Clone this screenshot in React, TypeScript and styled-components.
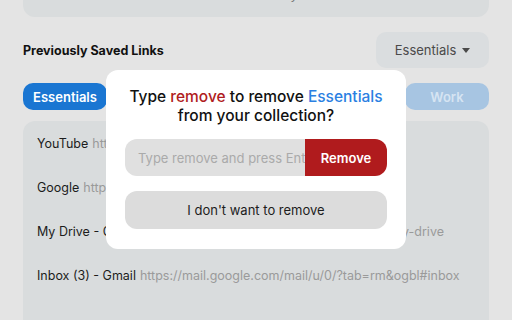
import React from "react";
import styled, { createGlobalStyle } from "styled-components";

const Global = createGlobalStyle`
  html, body { margin: 0; padding: 0; background: #e4e4e4; overflow: hidden; }
  body { font-family: Inter, "Noto Sans", sans-serif; }
  * { box-sizing: border-box; }
`;

const Page = styled.div`
  position: relative;
  width: 512px;
  height: 320px;
  overflow: hidden;
  padding: 0 23px;
`;

const TopPanel = styled.div`
  margin-top: -23px;
  height: 40px;
  border-radius: 12px;
  background: #d9dcdd;
  display: flex;
  align-items: center;
  justify-content: center;
  color: #777;
  font-size: 13px;
  padding-bottom: 6px;
`;

const Header = styled.div`
  margin-top: 15px;
  height: 36px;
  display: flex;
  align-items: center;
  justify-content: space-between;
`;

const Heading = styled.div`
  font-size: 12.5px;
  font-weight: 700;
  color: #111;
`;

const Dropdown = styled.div`
  width: 113px;
  height: 36px;
  border-radius: 10px;
  background: #dadddf;
  display: flex;
  align-items: center;
  justify-content: center;
  gap: 6px;
  color: #4a4a4a;
  font-size: 13px;
`;

const Caret = styled.span`
  width: 0;
  height: 0;
  border-left: 4.5px solid transparent;
  border-right: 4.5px solid transparent;
  border-top: 5px solid #4a4a4a;
  margin-top: 1px;
`;

const Tabs = styled.div`
  margin-top: 15px;
  display: grid;
  grid-template-columns: repeat(5, 1fr);
  gap: 11.5px;
`;

const Tab = styled.div<{ $active?: boolean }>`
  height: 27px;
  border-radius: 10px;
  background: ${(p) => (p.$active ? "#1a76d2" : "#a7c5e2")};
  color: ${(p) => (p.$active ? "#ffffff" : "#d6e4f2")};
  font-size: 13px;
  font-weight: 600;
  display: flex;
  align-items: center;
  justify-content: center;
`;

const List = styled.div`
  margin-top: 11px;
  min-height: 230px;
  border-radius: 12px;
  background: #d9dcdd;
`;

const Row = styled.div`
  height: 44px;
  padding-left: 14px;
  display: flex;
  align-items: center;
  font-size: 12.5px;
  white-space: nowrap;
  overflow: hidden;
`;

const Title = styled.span`
  color: #1c1c1c;
  margin-right: 4px;
`;

const Url = styled.span`
  color: #9a9a9a;
`;

const Modal = styled.div`
  position: absolute;
  left: 106px;
  top: 70px;
  width: 300px;
  height: 179px;
  background: #ffffff;
  border-radius: 12px;
  padding: 17px 19px 19px;
  display: flex;
  flex-direction: column;
`;

const ModalTitle = styled.div`
  text-align: center;
  font-size: 15.5px;
  font-weight: 500;
  line-height: 19px;
  color: #111;
`;

const Red = styled.span`
  color: #b01c22;
`;

const Blue = styled.span`
  color: #2b80e2;
`;

const InputRow = styled.div`
  margin-top: 14px;
  height: 37px;
  display: flex;
  border-radius: 12px;
  overflow: hidden;
`;

const Input = styled.div`
  flex: 1;
  background: #e0e0e0;
  display: flex;
  align-items: center;
  padding-left: 12px;
  font-size: 13px;
  color: #aaaaaa;
  white-space: nowrap;
  overflow: hidden;
`;

const Cursor = styled.span`
  display: inline-block;
  width: 1px;
  height: 15px;
  background: #333;
  margin-right: 1px;
`;

const RemoveButton = styled.div`
  width: 82px;
  background: #b01b1d;
  color: #fff;
  font-size: 13px;
  font-weight: 600;
  display: flex;
  align-items: center;
  justify-content: center;
`;

const CancelButton = styled.div`
  margin-top: 15px;
  height: 38px;
  border-radius: 12px;
  background: #dcdcdc;
  color: #1c1c1c;
  font-size: 13px;
  display: flex;
  align-items: center;
  justify-content: center;
`;

const links = [
  { title: "YouTube", url: "https://www.youtube.com/" },
  { title: "Google", url: "https://www.google.com/" },
  { title: "My Drive - Google Drive", url: "https://drive.google.com/drive/u/0/my-drive" },
  { title: "Inbox (3) - Gmail", url: "https://mail.google.com/mail/u/0/?tab=rm&ogbl#inbox" },
];

export default function App() {
  return (
    <Page>
      <Global />
      <TopPanel>Add manually</TopPanel>
      <Header>
        <Heading>Previously Saved Links</Heading>
        <Dropdown>
          Essentials <Caret />
        </Dropdown>
      </Header>
      <Tabs>
        <Tab $active>Essentials</Tab>
        <Tab>Personal</Tab>
        <Tab>School</Tab>
        <Tab>Social</Tab>
        <Tab>Work</Tab>
      </Tabs>
      <List>
        {links.map((l) => (
          <Row key={l.title}>
            <Title>{l.title}</Title>
            <Url>{l.url}</Url>
          </Row>
        ))}
      </List>
      <Modal>
        <ModalTitle>
          Type <Red>remove</Red> to remove <Blue>Essentials</Blue>
          <br />
          from your collection?
        </ModalTitle>
        <InputRow>
          <Input>
            <Cursor />
            Type remove and press Enter
          </Input>
          <RemoveButton>Remove</RemoveButton>
        </InputRow>
        <CancelButton>I don't want to remove</CancelButton>
      </Modal>
    </Page>
  );
}
